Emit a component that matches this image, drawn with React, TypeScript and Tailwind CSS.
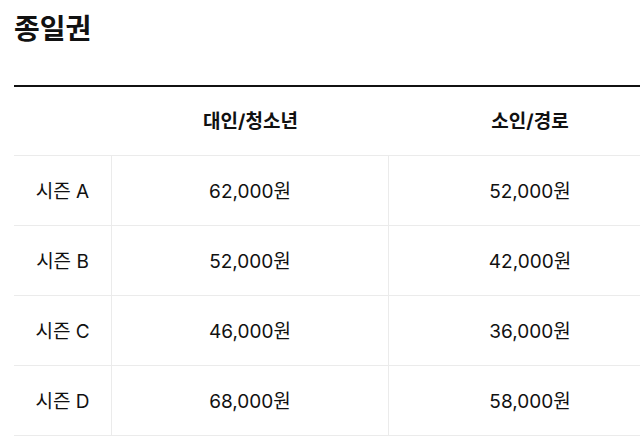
const rows = [
  { season: "시즌 A", adult: "62,000원", child: "52,000원" },
  { season: "시즌 B", adult: "52,000원", child: "42,000원" },
  { season: "시즌 C", adult: "46,000원", child: "36,000원" },
  { season: "시즌 D", adult: "68,000원", child: "58,000원" },
];

const font = "font-['Inter','Noto_Sans_CJK_KR',sans-serif]";

export default function App() {
  return (
    <div className={`w-[640px] h-[442px] overflow-hidden bg-white text-[#111] ${font}`}>
      <h2 className="ml-[14px] pt-[11px] text-[28px] font-bold leading-[36px]">
        종일권
      </h2>
      <div className="ml-[14px] mt-[38px] w-[657px] border-t-2 border-[#111]">
        <div className="grid h-[69px] grid-cols-[98px_277px_282px] items-center border-b border-[#ebebeb] pt-[2px] text-center text-[19px] font-bold">
          <div />
          <div>대인/청소년</div>
          <div>소인/경로</div>
        </div>
        {rows.map((r) => (
          <div
            key={r.season}
            className="grid h-[70px] grid-cols-[98px_277px_282px] border-b border-[#ebebeb] text-center text-[19px]"
          >
            <div className="flex items-center justify-center border-r border-[#ebebeb] pt-[3px]">{r.season}</div>
            <div className="flex items-center justify-center border-r border-[#ebebeb] pt-[3px]">{r.adult}</div>
            <div className="flex items-center justify-center pt-[3px]">{r.child}</div>
          </div>
        ))}
      </div>
    </div>
  );
}
